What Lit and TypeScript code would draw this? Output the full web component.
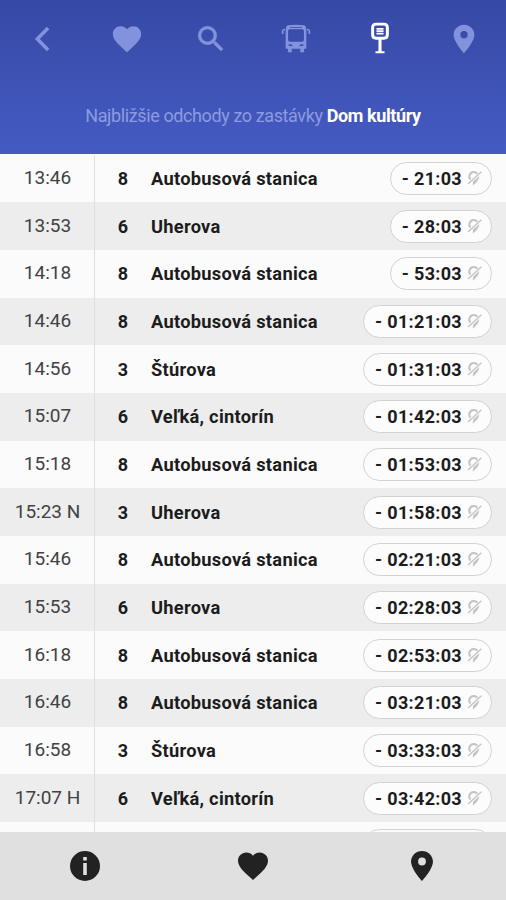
import { LitElement, html, css, svg, nothing } from "lit";
import { customElement, property } from "lit/decorators.js";

const HEART = "M12 21.35l-1.45-1.32C5.4 15.36 2 12.28 2 8.5 2 5.42 4.42 3 7.5 3c1.74 0 3.41.81 4.5 2.09C13.09 3.81 14.76 3 16.5 3 19.58 3 22 5.42 22 8.5c0 3.78-3.4 6.86-8.55 11.54L12 21.35z";
const PIN = "M12 2C8 2 4.7 5.13 4.7 9c0 5.25 7.3 13 7.3 13s7.3-7.75 7.3-13c0-3.87-3.3-7-7.3-7zm0 9.6a2.6 2.6 0 0 1 0-5.2 2.6 2.6 0 0 1 0 5.2z";

const ICONS = {
  back: svg`<path fill="none" stroke="currentColor" stroke-width="2.5" d="M15.6 4.3 8 12l7.6 7.7"/>`,
  heart: svg`<path d=${HEART}/>`,
  search: svg`<path stroke="currentColor" stroke-width="0.4" d="M15.5 14h-.79l-.28-.27A6.471 6.471 0 0 0 16 9.5 6.5 6.5 0 1 0 9.5 16c1.61 0 3.09-.59 4.23-1.57l.27.28v.79l5 4.99L20.49 19l-4.99-5zm-6 0C7.01 14 5 11.99 5 9.5S7.01 5 9.5 5 14 7.01 14 9.5 11.99 14 9.5 14z"/>`,
  bus: svg`<path fill-rule="evenodd" d="M5 3.4Q5.4 2.5 6.6 2.3Q12 1.5 17.4 2.3Q18.6 2.5 19 3.4L19.3 5.5V18.8H17.7V21.3H15V18.8H9V21.3H6.3V18.8H4.7V5.5ZM7.8 3.5V4.1H16.2V3.5ZM7.2 5.2 6.4 6.2V12.6Q6.5 13.9 7.6 14H16.4Q17.5 13.9 17.6 12.6V6.2L16.8 5.2ZM6.9 15.6V16.8L9.4 17.2V16ZM17.1 15.6V16.8L14.6 17.2V16Z"/><path d="M4.3 4.8Q2.2 4.8 2 6.3V8.5H3.2V6H4.3ZM19.7 4.8Q21.8 4.8 22 6.3V8.5H20.8V6H19.7Z"/>`,
  stop: svg`<path fill="none" stroke="currentColor" stroke-width="2.1" d="M9.2 1.5h5.6q2.4 0 2.4 2.4v5q0 2.6-2.4 2.6H9.2q-2.4 0-2.4-2.6v-5q0-2.4 2.4-2.4z"/><path d="M9.5 4.2h5v1.2h-5zM9.5 5.9h5v1.2h-5zM9.5 7.6h5v1.2h-5zM10.9 12h2.2v8.6h2.1v1.5H8.8v-1.5h2.1z"/>`,
  pin: svg`<path d=${PIN}/>`,
  info: svg`<path d="M12 2a10 10 0 1 0 0 20 10 10 0 0 0 0-20zm1.2 16h-2.4v-8h2.4zm0-9.6h-2.4V6h2.4z"/>`,
  off: svg`<path fill="none" stroke="currentColor" stroke-width="3.2" d="M6.2 13.4A5.6 5.6 0 0 1 15.8 5.2"/><path d="M18.8 8.3Q19 14 9.5 22.4L10.2 16.4z"/><path fill="none" stroke="currentColor" stroke-width="1.9" d="M2.8 19.6 21.8 2.4"/>`,
};
type IconName = keyof typeof ICONS;

@customElement("app-icon")
class AppIcon extends LitElement {
  @property() name: IconName = "pin";
  static styles = css`
    :host { display: block; }
    svg { display: block; width: 100%; height: 100%; fill: currentColor; }
  `;
  render() {
    return html`<svg viewBox="0 0 24 24" aria-hidden="true">${ICONS[this.name]}</svg>`;
  }
}

@customElement("departure-row")
class DepartureRow extends LitElement {
  @property() time = "";
  @property() line = "";
  @property() target = "";
  @property() left = "";
  static styles = css`
    :host { display: grid; grid-template-columns: 95px 56px 1fr auto; height: 47.68px; align-items: center; color: #1c1c1c; font-size: 18px; }
    .time { height: 100%; box-sizing: border-box; border-right: 1px solid #dfdfdf; padding: 0 0 2px 1px; display: flex; align-items: center; justify-content: center; font-size: 19px; color: #424242; white-space: nowrap; }
    .line { text-align: center; font-weight: 700; }
    .target { font-size: 18.3px; font-weight: 700; letter-spacing: 0.27px; white-space: nowrap; }
    .pill { display: flex; align-items: center; justify-content: flex-end; box-sizing: border-box; height: 33px; margin-right: 14px; padding: 0 8px 0 11px; border: 1.5px solid #d2d2d2; border-radius: 17px; background: #fcfcfc; font-weight: 700; white-space: nowrap; }
    .pill.blank { width: 129px; }
    .amount { letter-spacing: 0.32px; }
    .off { width: 17px; height: 17px; margin-left: 4px; color: #c4c4c4; }
  `;
  render() {
    return html`
      <div class="time">${this.time}</div>
      <div class="line">${this.line}</div>
      <div class="target">${this.target}</div>
      <div class="pill ${this.left ? "" : "blank"}">
        ${this.left ? html`<span class="amount">- ${this.left}</span><app-icon class="off" name="off"></app-icon>` : nothing}
      </div>
    `;
  }
}

const DEPARTURES = [
  ["13:46", "8", "Autobusová stanica", "21:03"],
  ["13:53", "6", "Uherova", "28:03"],
  ["14:18", "8", "Autobusová stanica", "53:03"],
  ["14:46", "8", "Autobusová stanica", "01:21:03"],
  ["14:56", "3", "Štúrova", "01:31:03"],
  ["15:07", "6", "Veľká, cintorín", "01:42:03"],
  ["15:18", "8", "Autobusová stanica", "01:53:03"],
  ["15:23 N", "3", "Uherova", "01:58:03"],
  ["15:46", "8", "Autobusová stanica", "02:21:03"],
  ["15:53", "6", "Uherova", "02:28:03"],
  ["16:18", "8", "Autobusová stanica", "02:53:03"],
  ["16:46", "8", "Autobusová stanica", "03:21:03"],
  ["16:58", "3", "Štúrova", "03:33:03"],
  ["17:07 H", "6", "Veľká, cintorín", "03:42:03"],
  ["", "", "", ""],
];
const TABS: IconName[] = ["back", "heart", "search", "bus", "stop", "pin"];
const BOTTOM: IconName[] = ["info", "heart", "pin"];

@customElement("app-root")
class AppRoot extends LitElement {
  static styles = css`
    :host { display: flex; flex-direction: column; height: 900px; overflow: hidden; background: #fbfbfb; font-family: Roboto, "Liberation Sans", sans-serif; }
    .head { flex: none; height: 154px; background: linear-gradient(#3749a5, #455bc3); color: #8292dc; }
    .tabs { display: grid; grid-template-columns: repeat(6, 1fr); height: 78px; padding-left: 1px; align-items: center; justify-items: center; }
    .tab { width: 34px; height: 34px; }
    .tab.active { color: #fff; }
    .title { margin: 0; padding-top: 27px; text-align: center; font-size: 18px; letter-spacing: -0.39px; line-height: 21px; font-weight: 400; color: #8b9be0; white-space: nowrap; }
    .stop { color: #fff; font-weight: 700; }
    .list { flex: 1; min-height: 0; overflow: hidden; padding-top: 0.5px; }
    .row:nth-child(even) { background: #ededed; }
    .bottom { flex: none; height: 68px; background: #e0e0e0; color: #222; display: grid; grid-template-columns: repeat(3, 1fr); padding-left: 1px; align-items: center; justify-items: center; }
    .nav { width: 36px; height: 36px; }
  `;
  render() {
    return html`
      <header class="head">
        <nav class="tabs">
          ${TABS.map((n) => html`<app-icon class="tab ${n === "stop" ? "active" : ""}" name=${n}></app-icon>`)}
        </nav>
        <h1 class="title">Najbližšie odchody zo zastávky <span class="stop">Dom kultúry</span></h1>
      </header>
      <main class="list">
        ${DEPARTURES.map(([time, line, target, left]) => html`<departure-row class="row" time=${time} line=${line} target=${target} left=${left}></departure-row>`)}
      </main>
      <footer class="bottom">
        ${BOTTOM.map((n) => html`<app-icon class="nav" name=${n}></app-icon>`)}
      </footer>
    `;
  }
}
